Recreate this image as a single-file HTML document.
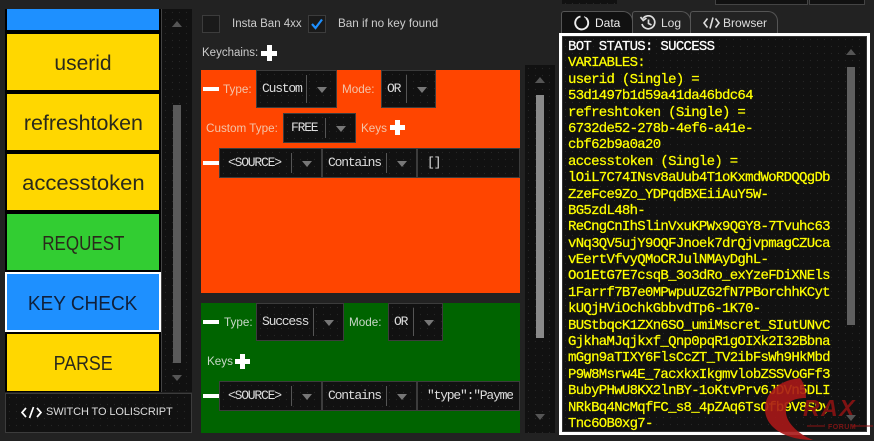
<!DOCTYPE html>
<html><head><meta charset="utf-8">
<style>
*{box-sizing:border-box;margin:0;padding:0}
html,body{width:874px;height:441px;overflow:hidden;background:#222}
body{position:relative;font-family:"Liberation Sans",sans-serif;color:#ddd}
.a{position:absolute}
.dot{background-color:#111;background-image:radial-gradient(#262626 0.6px,transparent 0.8px);background-size:7px 7px}
.btn{position:absolute;left:7px;width:152px;text-align:center;font-size:21px;color:#2a2a1c}
.btn span{display:inline-block;position:relative;top:2px}
.t{position:absolute;font-size:11.7px;white-space:nowrap;line-height:14px}
.c{position:absolute;border:1px solid #3c3c3c;background-color:#111;background-image:radial-gradient(#262626 0.6px,transparent 0.8px);background-size:7px 7px;color:#ddd;font-family:"Liberation Mono",monospace;font-size:13px;letter-spacing:-1.2px;white-space:nowrap}
.c span{position:absolute;left:5px;top:50%;transform:translateY(-55%)}
.c i{position:absolute;top:4px;bottom:4px;width:1px;background:#555}
.c b{position:absolute;top:50%;margin-top:-2px;width:0;height:0;border-left:5px solid transparent;border-right:5px solid transparent;border-top:6px solid #777}
.up,.dn{position:absolute;width:0;height:0;border-left:5px solid transparent;border-right:5px solid transparent}
.up{border-bottom:6px solid #555}.dn{border-top:6px solid #555}
.plus{position:absolute;width:16px;height:16px;background:linear-gradient(#fff,#fff) center/16px 5px no-repeat,linear-gradient(#fff,#fff) center/5px 16px no-repeat}
.minus{position:absolute;width:16px;height:4px;background:#fff}
.tab{position:absolute;top:11px;height:22px;background:#222;border:1px solid #555;border-bottom:none;border-radius:3px 10px 0 0;font-size:12px;color:#ddd;line-height:20px;white-space:nowrap}
.tab span{top:1px!important}
#log{position:absolute;left:568px;top:39px;font-family:"Liberation Mono",monospace;font-size:14px;letter-spacing:-.7px;line-height:16.39px;color:#ff0;white-space:pre;-webkit-text-stroke:.25px currentColor}
</style></head><body>

<!-- top strips -->
<div class="a" style="left:715px;top:0;width:93px;height:5px;background:#111;border:1px solid #444;border-top:none"></div>
<div class="a" style="left:809px;top:0;width:56px;height:5px;background:#111;border:1px solid #444;border-top:none"></div>
<div class="a dot" style="left:562px;top:0;width:55px;height:4px"></div>

<!-- left list -->
<div class="a" style="left:5px;top:9px;width:157px;height:383px;background:#000;border-right:1px solid #444"></div>
<div class="btn" style="top:9px;height:21px;background:#1e90ff"></div>
<div class="btn" style="top:34px;height:56px;line-height:56px;background:#ffd700"><span>userid</span></div>
<div class="btn" style="top:94px;height:56px;line-height:56px;background:#ffd700"><span style="transform:scaleX(1.02)">refreshtoken</span></div>
<div class="btn" style="top:154px;height:56px;line-height:56px;background:#ffd700"><span style="transform:scaleX(1.05)">accesstoken</span></div>
<div class="btn" style="top:214px;height:56px;line-height:56px;background:#32cd32;font-size:20px"><span style="transform:scaleX(.85)">REQUEST</span></div>
<div class="a" style="left:5px;top:272px;width:156px;height:60px;background:#1e90ff;border:2px solid #fff"></div>
<div class="btn" style="top:274px;height:56px;line-height:56px;font-size:20px;color:#10203a"><span style="transform:scaleX(.95)">KEY CHECK</span></div>
<div class="btn" style="top:334px;height:57px;line-height:57px;background:#ffd700;font-size:20px"><span style="transform:scaleX(.89)">PARSE</span></div>
<!-- left scrollbar -->
<div class="a dot" style="left:162px;top:9px;width:30px;height:383px"></div>
<div class="up" style="left:172px;top:21px"></div>
<div class="a" style="left:173px;top:105px;width:8px;height:258px;background:#5a5a5a"></div>
<div class="dn" style="left:172px;top:375px"></div>
<!-- switch button -->
<div class="a dot" style="left:5px;top:393px;width:187px;height:40px;border:1px solid #3c3c3c"></div>
<svg class="a" style="left:21px;top:406px" width="21" height="13" viewBox="0 0 21 13"><path d="M5 2 1 6.500 5 11M16 2l4 4.500-4 4.500M12.500 1 8.500 12" fill="none" stroke="#fff" stroke-width="1.700"/></svg>
<div class="t" style="left:46px;top:405px;font-size:11px;color:#ddd;letter-spacing:-.1px">SWITCH TO LOLISCRIPT</div>

<!-- checkboxes -->
<div class="a" style="left:202px;top:15px;width:18px;height:18px;background:#1a1a1a;border:1px solid #3c3c3c"></div>
<div class="t" style="left:232px;top:17px;color:#ccc;font-size:11.500px">Insta Ban 4xx</div>
<div class="a" style="left:308px;top:15px;width:18px;height:18px;background:#1a1a1a;border:1px solid #3c3c3c"></div>
<svg class="a" style="left:308px;top:15px" width="18" height="18" viewBox="0 0 18 18"><path d="M4 9l3.500 4L14 4.500" fill="none" stroke="#1e90ff" stroke-width="2.200"/></svg>
<div class="t" style="left:338px;top:17px;color:#ccc">Ban if no key found</div>
<div class="t" style="left:202px;top:46px;color:#ccc;font-size:11.500px">Keychains:</div>
<div class="plus" style="left:261px;top:45px"></div>

<!-- orange -->
<div class="a" style="left:201px;top:70px;width:319px;height:223px;background:#ff4500"></div>
<div class="minus" style="left:203px;top:87px"></div>
<div class="t" style="left:223px;top:83px;color:#f4c4a8">Type:</div>
<div class="c" style="left:256px;top:70px;width:81px;height:38px"><span>Custom</span><i style="left:49px"></i><b style="left:60px"></b></div>
<div class="t" style="left:342px;top:83px;color:#f4c4a8">Mode:</div>
<div class="c" style="left:381px;top:70px;width:55px;height:38px"><span>OR</span><i style="left:24px"></i><b style="left:35px"></b></div>
<div class="t" style="left:206px;top:122px;color:#f4c4a8">Custom Type:</div>
<div class="c" style="left:283px;top:113px;width:73px;height:30px"><span style="left:7px">FREE</span><i style="left:41px"></i><b style="left:52px"></b></div>
<div class="t" style="left:361px;top:122px;color:#f4c4a8">Keys</div>
<div class="plus" style="left:390px;top:120px;width:15px;height:15px"></div>
<div class="minus" style="left:203px;top:161px"></div>
<div class="c" style="left:219px;top:148px;width:103px;height:30px"><span style="left:8px">&lt;SOURCE&gt;</span><i style="left:71px"></i><b style="left:82px"></b></div>
<div class="c" style="left:322px;top:148px;width:95px;height:30px"><span>Contains</span><i style="left:63px"></i><b style="left:74px"></b></div>
<div class="c" style="left:417px;top:148px;width:103px;height:30px"><span style="left:9px">[]</span></div>

<!-- green -->
<div class="a" style="left:201px;top:303px;width:319px;height:130px;background:#006400"></div>
<div class="minus" style="left:203px;top:320px"></div>
<div class="t" style="left:224px;top:316px;color:#c8d8c8">Type:</div>
<div class="c" style="left:256px;top:303px;width:88px;height:38px"><span>Success</span><i style="left:56px"></i><b style="left:67px"></b></div>
<div class="t" style="left:349px;top:316px;color:#c8d8c8">Mode:</div>
<div class="c" style="left:388px;top:303px;width:55px;height:38px"><span>OR</span><i style="left:24px"></i><b style="left:35px"></b></div>
<div class="t" style="left:207px;top:355px;color:#c8d8c8">Keys</div>
<div class="plus" style="left:235px;top:354px;width:15px;height:15px"></div>
<div class="minus" style="left:203px;top:394px"></div>
<div class="c" style="left:219px;top:381px;width:103px;height:30px"><span style="left:8px">&lt;SOURCE&gt;</span><i style="left:71px"></i><b style="left:82px"></b></div>
<div class="c" style="left:322px;top:381px;width:95px;height:30px"><span>Contains</span><i style="left:63px"></i><b style="left:74px"></b></div>
<div class="c" style="left:417px;top:381px;width:103px;height:30px;overflow:hidden"><span style="left:9px">"type":"Paymen</span><em style="position:absolute;left:95px;top:0;width:7px;height:28px;background:#111"></em></div>

<!-- middle scrollbar -->
<div class="a dot" style="left:525px;top:65px;width:30px;height:368px"></div>
<div class="up" style="left:535px;top:77px"></div>
<div class="a" style="left:536px;top:95px;width:8px;height:243px;background:#8a8a8a"></div>
<div class="dn" style="left:535px;top:414px"></div>

<!-- tabs -->
<div class="tab" style="left:632px;width:59px"><svg class="a" style="left:6px;top:3px" width="18" height="16" viewBox="0 0 18 16"><path d="M4 3.500A6.500 6.500 0 1 1 3 9M1.500 2 4.200 5.500 7.500 3M9.500 4.500v4l3 1.500" fill="none" stroke="#ddd" stroke-width="1.700"/></svg><span class="a" style="left:28px">Log</span></div>
<div class="tab" style="left:690px;width:88px"><svg class="a" style="left:12px;top:5px" width="17" height="12" viewBox="0 0 17 12"><path d="M4.500 1.500 1 6l3.500 4.500M12.500 1.500 16 6l-3.500 4.500M10 .5 7 11.500" fill="none" stroke="#ddd" stroke-width="1.600"/></svg><span class="a" style="left:32px">Browser</span></div>
<div class="tab" style="left:561px;width:72px;background:#111;height:23px"><svg class="a" style="left:12px;top:3px" width="16" height="16" viewBox="0 0 16 16"><path d="M6.500 1.500A6.500 6.500 0 1 0 12 3" fill="none" stroke="#eee" stroke-width="1.900"/><path d="M10 1.700A6.500 6.500 0 0 1 14.500 8" fill="none" stroke="#eee" stroke-width="1"/></svg><span class="a" style="left:33px;color:#eee">Data</span></div>

<!-- data box -->
<div class="a dot" style="left:559px;top:33px;width:311px;height:402px;border:3px solid #fff"></div>
<div class="a" style="left:562px;top:36px;width:305px;height:396px;border:1px solid #333"></div>
<div id="log"><span style="color:#fff">BOT STATUS: SUCCESS</span>
VARIABLES:
userid (Single) =
53d1497b1d59a41da46bdc64
refreshtoken (Single) =
6732de52-278b-4ef6-a41e-
cbf62b9a0a20
accesstoken (Single) =
lOiL7C74INsv8aUub4T1oKxmdWoRDQQgDb
ZzeFce9Zo_YDPqdBXEiiAuY5W-
BG5zdL48h-
ReCngCnIhSlinVxuKPWx9QGY8-7Tvuhc63
vNq3QV5ujY9OQFJnoek7drQjvpmagCZUca
vEertVfvyQMoCRJulNMAyDghL-
Oo1EtG7E7csqB_3o3dRo_exYzeFDiXNEls
1Farrf7B7e0MPwpuUZG2fN7PBorchhKCyt
kUQjHViOchkGbbvdTp6-1K70-
BUStbqcK1ZXn6SO_umiMscret_SIutUNvC
GjkhaMJqjkxf_Qnp0pqR1gOIXk2I32Bbna
mGgn9aTIXY6FlsCcZT_TV2ibFsWh9HkMbd
P9W8Msrw4E_7acxkxIkgmvlobZSSVoGFf3
BubyPHwU8KX2lnBY-1oKtvPrv6JDVn5DLI
NRkBq4NcMqfFC_s8_4pZAq6TsOfb9V8SDy
Tnc6OB0xg7-</div>
<!-- inner scrollbar -->
<div class="up" style="left:846px;top:49px"></div>
<div class="a" style="left:847px;top:67px;width:8px;height:258px;background:#5f5f5f"></div>

<!-- watermark -->
<svg class="a" style="left:760px;top:378px" width="114" height="63" viewBox="0 0 114 63">
<path d="M40 0C20 2 5 14 5 31 5 49 25 62 53 62 40 57 27 46 26 35 25 25 32 20 46 20 46 12 44 5 40 0z" fill="#a81818" fill-opacity=".9"/>
<text x="43" y="38" font-family="Liberation Sans,sans-serif" font-weight="700" font-style="italic" font-size="23" fill="#7e1212" letter-spacing="1.500">RAX</text>
<text x="68" y="51" font-family="Liberation Sans,sans-serif" font-weight="700" font-size="7" fill="#7c1414" letter-spacing=".5">FORUM</text>
<path d="M47 48h18M92 48h21" stroke="#8f1414" stroke-width="1"/>
</svg>
<div class="dn" style="left:846px;top:415px"></div>
</body></html>
